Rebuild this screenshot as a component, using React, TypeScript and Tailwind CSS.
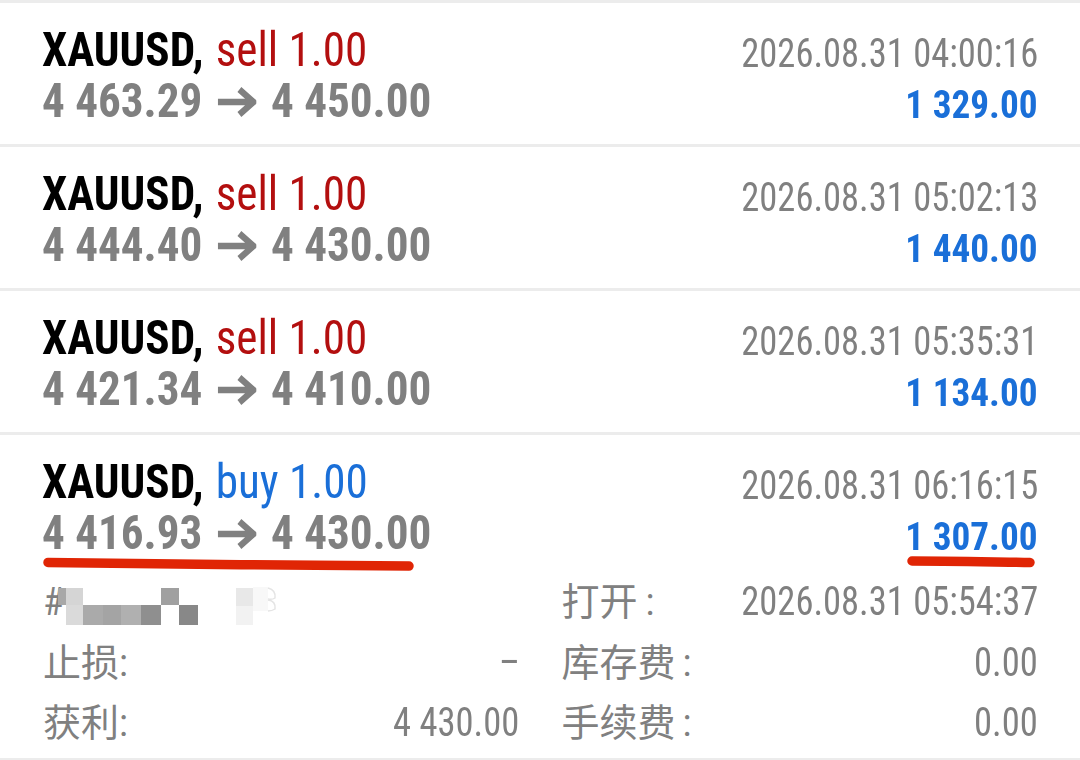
type RowProps = { side: string; sideColor: string; from: string; to: string; time: string; profit: string };

function Arrow() {
  return (
    <svg className="inline-block mx-[16px] self-center mt-[3px]" width="41" height="32" viewBox="0 0 41 32">
      <path d="M0 16H37M23 3.500L38 16L23 28.500" stroke="#808080" strokeWidth="6.500" fill="none" />
    </svg>
  );
}

function Head({ side, sideColor, from, to, time, profit }: RowProps) {
  return (
    <div className="flex justify-between">
      <div className="flex flex-col -ml-px">
        <div className="h-[51px] flex items-baseline text-[48px] leading-[51px] whitespace-nowrap [font-stretch:75%] origin-left scale-x-[0.94]">
          <span className="font-bold text-black">XAUUSD,</span>
          <span className={`ml-[13px] ${sideColor}`}>{side} 1.00</span>
        </div>
        <div className="h-[51px] flex items-baseline text-[48px] leading-[51px] font-bold text-[#808080] whitespace-nowrap [font-stretch:75%] origin-left scale-x-[0.94]">
          {from}<Arrow />{to}
        </div>
      </div>
      <div className="flex flex-col items-end -mr-px">
        <div className="h-[51px] text-[40px] leading-[60px] text-[#808080] whitespace-nowrap [font-stretch:75%] origin-right scale-x-[0.913]">{time}</div>
        <div className="h-[51px] text-[39px] leading-[60px] font-bold text-[#1a6fd8] whitespace-nowrap [font-stretch:75%] origin-right scale-x-[0.955]">{profit}</div>
      </div>
    </div>
  );
}

function Row(p: RowProps) {
  return (
    <div className="h-[144px] shrink-0 border-b-[3px] border-[#ececec] pl-[43px] pr-[43px] pt-[21px]">
      <Head {...p} />
    </div>
  );
}

function Detail({ label, colon, value }: { label: string; colon: string; value: string }) {
  return (
    <div className="h-[60.5px] flex items-baseline justify-between text-[#808080] text-[38px] leading-[60px] whitespace-nowrap">
      <span className="flex items-baseline">
        {label}
        <span className={colon}>:</span>
      </span>
      <span className="text-[40px] [font-stretch:75%] origin-right scale-x-[0.913] -mr-px">{value}</span>
    </div>
  );
}

export default function App() {
  return (
    <div className="relative w-[1080px] h-[760px] overflow-hidden bg-white font-['Roboto','Noto_Sans_CJK_SC',sans-serif]">
      <div className="h-[3px] bg-[#ececec]" />
      <Row side="sell" sideColor="text-[#b30f0f]" from="4 463.29" to="4 450.00" time="2026.08.31 04:00:16" profit="1 329.00" />
      <Row side="sell" sideColor="text-[#b30f0f]" from="4 444.40" to="4 430.00" time="2026.08.31 05:02:13" profit="1 440.00" />
      <Row side="sell" sideColor="text-[#b30f0f]" from="4 421.34" to="4 410.00" time="2026.08.31 05:35:31" profit="1 134.00" />
      <div className="pl-[43px] pr-[43px] pt-[21px]">
        <Head side="buy" sideColor="text-[#1a6fd8]" from="4 416.93" to="4 430.00" time="2026.08.31 06:16:15" profit="1 307.00" />
        <div className="mt-[14px] grid grid-cols-2 gap-x-[43px]">
          <div className="flex flex-col">
            <div className="relative h-[60.5px] text-[#808080] text-[38px] leading-[60px] [font-stretch:75%]">
              #
              <svg className="absolute left-[13px] top-[0px]" width="240" height="60" viewBox="56 574 240 60">
                <defs>
                  <filter id="soft" x="-5%" y="-5%" width="110%" height="110%">
                    <feGaussianBlur stdDeviation="0.7" />
                  </filter>
                </defs>
                <g filter="url(#soft)">
                  <rect x="58" y="590" width="8" height="17" fill="#a8a8a8" />
                  <rect x="66" y="590" width="17" height="17" fill="#d5d5d5" />
                  <rect x="66" y="607" width="17" height="20" fill="#dadada" />
                  <rect x="83" y="607" width="20" height="20" fill="#aaaaaa" />
                  <rect x="103" y="607" width="18" height="20" fill="#a4a4a4" />
                  <rect x="121" y="607" width="20" height="20" fill="#b0b0b0" />
                  <rect x="141" y="607" width="20" height="20" fill="#8f8f8f" />
                  <rect x="161" y="590" width="18" height="17" fill="#a0a0a0" />
                  <rect x="179" y="607" width="19" height="20" fill="#888888" />
                  <rect x="236" y="590" width="17" height="18" fill="#e8e8e8" />
                  <rect x="236" y="608" width="17" height="19" fill="#f2f2f2" />
                  <rect x="253" y="589" width="15" height="24" fill="#f8f8f8" />
                  <path d="M268 590Q276 592 275 600Q272 602 268 601M268 602Q276 603 275 611Q272 613 268 613" stroke="#e4e4e4" strokeWidth="1.500" fill="none" />
                </g>
              </svg>
            </div>
            <Detail label="止损" colon="" value="–" />
            <Detail label="获利" colon="" value="4 430.00" />
          </div>
          <div className="flex flex-col">
            <Detail label="打开" colon="ml-[8px]" value="2026.08.31 05:54:37" />
            <Detail label="库存费" colon="ml-[7px]" value="0.00" />
            <Detail label="手续费" colon="ml-[7px]" value="0.00" />
          </div>
        </div>
      </div>
      <div className="absolute left-0 right-0 bottom-0 h-[2px] bg-[#ececec]" />
      <svg className="absolute left-0 top-0 pointer-events-none" width="1080" height="760" viewBox="0 0 1080 760">
        <path d="M48 562.500 C150 563 300 566 409 566" stroke="#e02505" strokeWidth="9.500" strokeLinecap="round" fill="none" />
        <path d="M912 561 C960 561 1000 562 1030 562.500" stroke="#e02505" strokeWidth="9.500" strokeLinecap="round" fill="none" />
      </svg>
    </div>
  );
}
